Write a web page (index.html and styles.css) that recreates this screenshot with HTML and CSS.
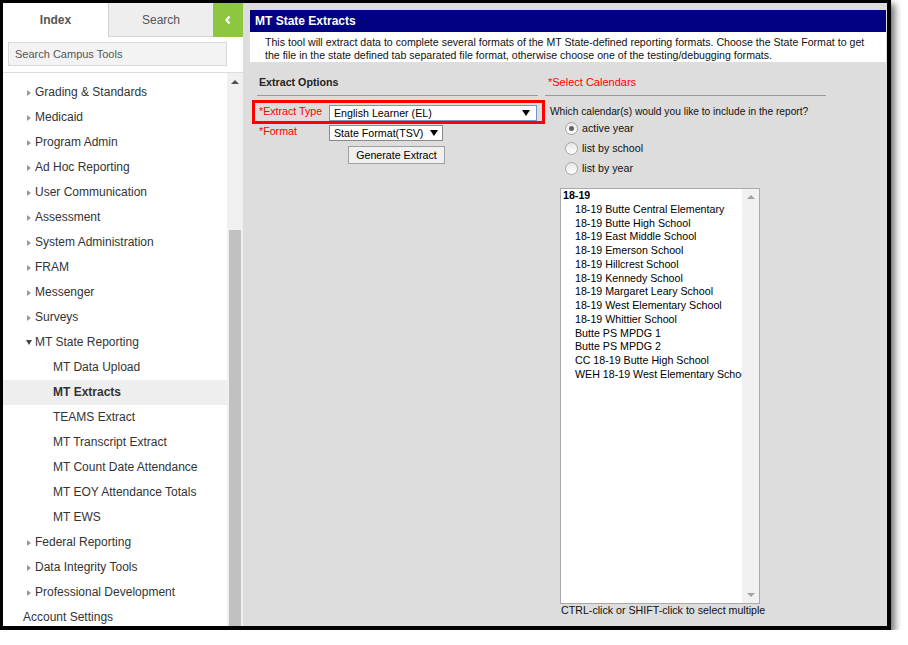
FILE: index.html
```html
<!DOCTYPE html>
<html lang="en">
<head>
    <meta charset="UTF-8">
    <meta name="viewport" content="width=device-width, initial-scale=1.0">
    <title>MT State Extracts</title>
    <link rel="stylesheet" href="styles.css">
</head>
<body>
    <div class="frame">
        <div class="sidebar">
            <div class="tabs">
                <div class="tab tab-active">Index</div>
                <div class="tab tab-search">Search</div>
                <div class="collapse">
                    <svg width="8" height="10" viewBox="0 0 8 10"><polyline points="5.5,1.5 2.5,5 5.5,8.5" fill="none" stroke="#fff" stroke-width="2.2"/></svg>
                </div>
            </div>
            <div class="search-box">
                <div class="search-input">Search Campus Tools</div>
            </div>
            <div class="menu-wrap">
                <div class="menu">
                    <div class="item"><span class="arrow"></span>Grading &amp; Standards</div>
                    <div class="item"><span class="arrow"></span>Medicaid</div>
                    <div class="item"><span class="arrow"></span>Program Admin</div>
                    <div class="item"><span class="arrow"></span>Ad Hoc Reporting</div>
                    <div class="item"><span class="arrow"></span>User Communication</div>
                    <div class="item"><span class="arrow"></span>Assessment</div>
                    <div class="item"><span class="arrow"></span>System Administration</div>
                    <div class="item"><span class="arrow"></span>FRAM</div>
                    <div class="item"><span class="arrow"></span>Messenger</div>
                    <div class="item"><span class="arrow"></span>Surveys</div>
                    <div class="item"><span class="arrow arrow-open"></span>MT State Reporting</div>
                    <div class="item sub">MT Data Upload</div>
                    <div class="item sub current">MT Extracts</div>
                    <div class="item sub">TEAMS Extract</div>
                    <div class="item sub">MT Transcript Extract</div>
                    <div class="item sub">MT Count Date Attendance</div>
                    <div class="item sub">MT EOY Attendance Totals</div>
                    <div class="item sub">MT EWS</div>
                    <div class="item"><span class="arrow"></span>Federal Reporting</div>
                    <div class="item"><span class="arrow"></span>Data Integrity Tools</div>
                    <div class="item"><span class="arrow"></span>Professional Development</div>
                    <div class="item top-level">Account Settings</div>
                </div>
                <div class="scrollbar">
                    <div class="scroll-up"></div>
                    <div class="scroll-thumb"></div>
                </div>
            </div>
        </div>

        <div class="main">
            <div class="title-bar">MT State Extracts</div>
            <div class="description">
                This tool will extract data to complete several formats of the MT State-defined reporting formats. Choose the State Format to get<br>
                the file in the state defined tab separated file format, otherwise choose one of the testing/debugging formats.
            </div>

            <div class="columns">
                <div class="col-left">
                    <div class="section-head">Extract Options</div>
                    <div class="highlight">
                        <div class="field-row">
                            <div class="label">*Extract Type</div>
                            <div class="select select-type">English Learner (EL)<span class="caret"></span></div>
                        </div>
                    </div>
                    <div class="field-row format-row">
                        <div class="label">*Format</div>
                        <div class="select select-format">State Format(TSV)<span class="caret"></span></div>
                    </div>
                    <div class="button">Generate Extract</div>
                </div>

                <div class="col-right">
                    <div class="section-head section-red">*Select Calendars</div>
                    <div class="question">Which calendar(s) would you like to include in the report?</div>
                    <div class="radio-row"><span class="radio checked"></span>active year</div>
                    <div class="radio-row"><span class="radio"></span>list by school</div>
                    <div class="radio-row"><span class="radio"></span>list by year</div>
                    <div class="listbox">
                        <div class="options">
                            <div class="group">18-19</div>
                            <div class="option">18-19 Butte Central Elementary</div>
                            <div class="option">18-19 Butte High School</div>
                            <div class="option">18-19 East Middle School</div>
                            <div class="option">18-19 Emerson School</div>
                            <div class="option">18-19 Hillcrest School</div>
                            <div class="option">18-19 Kennedy School</div>
                            <div class="option">18-19 Margaret Leary School</div>
                            <div class="option">18-19 West Elementary School</div>
                            <div class="option">18-19 Whittier School</div>
                            <div class="option">Butte PS MPDG 1</div>
                            <div class="option">Butte PS MPDG 2</div>
                            <div class="option">CC 18-19 Butte High School</div>
                            <div class="option">WEH 18-19 West Elementary School</div>
                        </div>
                        <div class="list-scroll">
                            <span class="tri-up"></span>
                            <span class="tri-down"></span>
                        </div>
                    </div>
                    <div class="hint">CTRL-click or SHIFT-click to select multiple</div>
                </div>
            </div>
        </div>
    </div>
</body>
</html>
```

FILE: styles.css
```css
body,
html {
    margin: 0;
    padding: 0;
    background-color: white;
    font-family: "Liberation Sans", Arial, sans-serif;
}

.frame {
    width: 884px;
    height: 623px;
    border-style: solid;
    border-color: #000;
    border-width: 3px 4px 4px 3px;
    display: flex;
    overflow: hidden;
    box-shadow: 4px 4px 7px rgba(0, 0, 0, 0.55);
}

/* sidebar */

.sidebar {
    width: 240px;
    display: flex;
    flex-direction: column;
    background-color: white;
}

.tabs {
    height: 34px;
    display: flex;
}

.tab {
    width: 105px;
    font-size: 12px;
    color: #555;
    text-align: center;
    line-height: 34px;
    box-sizing: border-box;
}

.tab-active {
    font-weight: bold;
}

.tab-search {
    background-color: #eeeeee;
    border-left: 1px solid #d4d4d4;
    border-bottom: 1px solid #d4d4d4;
}

.collapse {
    width: 30px;
    background-color: #8dc63f;
    display: flex;
    align-items: center;
    justify-content: center;
}

.search-box {
    padding: 5px 16px 6px 5px;
    border-bottom: 1px solid #dddddd;
}

.search-input {
    height: 22px;
    border: 1px solid #d8d8d8;
    background-color: #f3f3f3;
    font-size: 11px;
    color: #555;
    line-height: 22px;
    padding-left: 6px;
}

.menu-wrap {
    flex: 1;
    display: flex;
    overflow: hidden;
}

.menu {
    flex: 1;
    padding-top: 7px;
}

.item {
    height: 25px;
    line-height: 25px;
    font-size: 12px;
    color: #333;
    padding-left: 24px;
    display: flex;
    align-items: center;
    white-space: nowrap;
}

.arrow {
    width: 0;
    height: 0;
    border-left: 4px solid #999;
    border-top: 3px solid transparent;
    border-bottom: 3px solid transparent;
    margin-right: 4px;
}

.arrow-open {
    border-left: 3px solid transparent;
    border-right: 3px solid transparent;
    border-top: 5px solid #444;
    border-bottom: 0;
    margin-left: -1px;
    margin-right: 3px;
}

.item.sub {
    padding-left: 50px;
}

.item.current {
    background-color: #eeeeee;
    font-weight: bold;
}

.item.top-level {
    padding-left: 20px;
}

.scrollbar {
    width: 16px;
    background-color: #f0f0f0;
    display: flex;
    flex-direction: column;
}

.scroll-up {
    width: 0;
    height: 0;
    border-left: 4px solid transparent;
    border-right: 4px solid transparent;
    border-bottom: 4px solid #505050;
    margin: 7px auto 146px;
}

.scroll-thumb {
    flex: 1;
    margin: 0 2px;
    background-color: #c1c1c1;
}

/* main area */

.main {
    flex: 1;
    background-color: #dddddd;
    padding: 7px 1px 0 7px;
}

.title-bar {
    height: 22px;
    line-height: 22px;
    background-color: #000080;
    color: white;
    font-size: 12px;
    font-weight: bold;
    padding-left: 5px;
}

.description {
    background-color: white;
    font-size: 10.6px;
    line-height: 13px;
    color: #111;
    padding: 4px 15px 0 15px;
    height: 26px;
    white-space: nowrap;
}

.columns {
    display: flex;
    font-size: 10.67px;
    color: #111;
}

.col-left {
    width: 293px;
}

.col-right {
    width: 300px;
}

.section-head {
    margin: 14px 5px 0 7px;
    padding: 0 0 6px 2px;
    line-height: 13px;
    font-weight: bold;
    color: #222;
    border-bottom: 1px solid #999;
}

.section-red {
    font-size: 11px;
    font-weight: normal;
    color: #ff0000;
    margin: 14px 17px 0 2px;
    padding-left: 3px;
}

.highlight {
    margin: 4px 0 0 2px;
    width: 283px;
    border: 3px solid #ff0000;
    padding: 2px 0 0 4px;
    height: 16px;
    box-sizing: content-box;
}

.field-row {
    display: flex;
    align-items: flex-start;
}

.label {
    width: 70px;
    line-height: 13px;
    color: #ff0000;
}

.format-row {
    margin-top: 1px;
    padding-left: 9px;
}

.select {
    height: 14px;
    line-height: 14px;
    background-color: white;
    border: 1px solid #8a8a8a;
    padding-left: 4px;
    color: #000;
    display: flex;
    align-items: center;
    justify-content: space-between;
}

.select-type {
    width: 202px;
    border-color: #7396c8;
}

.select-format {
    width: 108px;
}

.caret {
    width: 0;
    height: 0;
    border-left: 4px solid transparent;
    border-right: 4px solid transparent;
    border-top: 6px solid #000;
    margin-right: 6px;
}

.select-format .caret {
    margin-right: 4px;
}

.button {
    margin: 5px 0 0 98px;
    width: 95px;
    height: 16px;
    line-height: 16px;
    text-align: center;
    border: 1px solid #a0a0a0;
    background-color: #f0f0f0;
    color: #000;
}

.question {
    margin-top: 9px;
    padding-left: 7px;
    line-height: 13px;
    color: #111;
    font-size: 10.2px;
}

.radio-row {
    height: 20px;
    display: flex;
    align-items: center;
    padding-left: 22px;
}

.radio {
    width: 11px;
    height: 11px;
    border: 1px solid #a6a6a6;
    border-radius: 50%;
    background: linear-gradient(#e6e6e6, #ffffff);
    margin-right: 4px;
    position: relative;
}

.radio.checked::after {
    content: "";
    position: absolute;
    left: 3px;
    top: 3px;
    width: 5px;
    height: 5px;
    border-radius: 50%;
    background-color: #606060;
}

.listbox {
    margin: 10px 0 0 17px;
    width: 198px;
    height: 414px;
    border: 1px solid #a9a9a9;
    background-color: white;
    display: flex;
    overflow: hidden;
}

.options {
    flex: 1;
    overflow: hidden;
    padding-left: 2px;
    white-space: nowrap;
    color: #000;
}

.group {
    line-height: 13.75px;
    font-weight: bold;
}

.option {
    line-height: 13.75px;
    padding-left: 12px;
}

.list-scroll {
    width: 17px;
    background-color: #f1f1f1;
    display: flex;
    flex-direction: column;
    align-items: center;
    justify-content: space-between;
    padding: 6px 0;
}

.tri-up {
    width: 0;
    height: 0;
    border-left: 4px solid transparent;
    border-right: 4px solid transparent;
    border-bottom: 4px solid #a3a3a3;
}

.tri-down {
    width: 0;
    height: 0;
    border-left: 4px solid transparent;
    border-right: 4px solid transparent;
    border-top: 4px solid #a3a3a3;
}

.hint {
    margin-left: 18px;
    line-height: 13px;
    color: #111;
}
```
